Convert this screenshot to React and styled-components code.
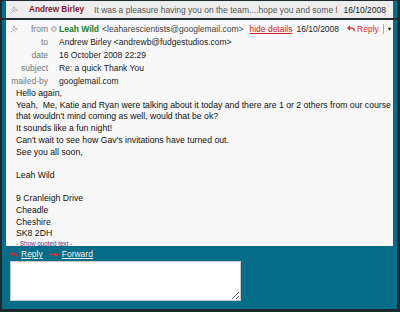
import React from "react";
import styled, { createGlobalStyle } from "styled-components";

const Global = createGlobalStyle`
  html, body { margin: 0; padding: 0; background: #1d2b31; }
  body { font-family: "Liberation Sans", Arial, sans-serif; }
  * { box-sizing: border-box; }
`;

const Frame = styled.div`
  width: 400px;
  height: 312px;
  background: #046d87;
  border-style: solid;
  border-color: #1d2b31;
  border-width: 1px 3px 3px 2px;
  display: flex;
  flex-direction: column;
  font-size: 8.5px;
  color: #111;
`;

const CollapsedRow = styled.div`
  height: 17px;
  margin: 0 4px;
  background: #ededed;
  display: flex;
  align-items: center;
  padding: 0 7px 0 4px;
  white-space: nowrap;
`;

const Divider = styled.div`
  height: 2px;
  background: #1d2b31;
`;

const PinIcon = styled.svg`
  width: 8px;
  height: 8px;
  flex: none;
`;

const Sender = styled.span`
  font-weight: bold;
  font-size: ${(p) => p.$size || 8.5}px;
  color: ${(p) => p.$color};
  margin-left: ${(p) => p.$offset || 0}px;
  flex: none;
`;

const Summary = styled.span`
  flex: 1;
  min-width: 0;
  overflow: hidden;
  color: #555;
  margin: 0 6px 0 10px;
`;

const DateText = styled.span`
  color: #222;
  flex: none;
  margin-left: ${(p) => p.$offset || 0}px;
`;

const Message = styled.div`
  height: 226px;
  margin: 0 4px;
  background: #f8f8f8;
  overflow: hidden;
  display: flex;
  flex-direction: column;
`;

const Header = styled.div`
  display: grid;
  grid-template-columns: 38px 11px 1fr;
  grid-auto-rows: 13px;
  align-items: center;
  padding: 2px 7px 0 4px;
`;

const Label = styled.div`
  color: #777;
  display: flex;
  justify-content: ${(p) => (p.$withPin ? "space-between" : "flex-end")};
  align-items: center;
  white-space: nowrap;
`;

const DotCell = styled.div`
  display: flex;
  justify-content: center;
  align-items: center;
`;

const Value = styled.div`
  color: #222;
  display: flex;
  align-items: center;
  white-space: nowrap;
`;

const Email = styled.span`
  color: #444;
  margin-left: 3px;
`;

const RightGroup = styled.div`
  margin-left: auto;
  padding-left: 6px;
  display: flex;
  align-items: center;
`;

const RedLink = styled.span`
  color: #d0262c;
  text-decoration: underline;
`;

const ReplyBtn = styled.span`
  display: flex;
  align-items: center;
  gap: 2px;
  margin-left: 8px;
  color: #d92b2b;
`;

const Sep = styled.span`
  width: 1px;
  height: 10px;
  background: #aaa;
  margin: 0 3px 0 4px;
`;

const Caret = styled.span`
  font-size: 5.5px;
  color: #111;
`;

const Body = styled.div`
  padding: 1px 6px 0 10px;
  font-size: 8.7px;
  line-height: 11.7px;
  color: #111;
  white-space: nowrap;
`;

const Line = styled.div`
  min-height: 11.7px;
`;

const Quoted = styled.div`
  font-size: 6.3px;
  line-height: 7.5px;
  color: #5a2f80;
`;

const Actions = styled.div`
  height: 15px;
  display: flex;
  align-items: center;
  padding: 1px 0 0 8px;
  gap: 7px;
`;

const ActionLink = styled.span`
  display: flex;
  align-items: center;
  gap: 3px;
  color: #eef2f3;
  text-decoration: underline;
`;

const ReplyArea = styled.textarea`
  width: 231px;
  height: 40px;
  margin: 0 0 0 8px;
  background: #fff;
  border: 1px solid #c8c8c8;
  padding: 0;
  resize: both;
  outline: none;
`;

const Pin = () => (
  <PinIcon viewBox="0 0 8 8">
    <g stroke="#b4b4b4" strokeWidth="1" fill="none" strokeLinecap="round">
      <path d="M3 1.2 L6.8 5" />
      <path d="M1.8 3 L5 6.2" />
      <path d="M4.6 1 L4 3" />
      <path d="M7 3.5 L5 4" />
      <path d="M3 5 L0.8 7.2" />
    </g>
  </PinIcon>
);

const Dot = () => (
  <svg width="6" height="6" viewBox="0 0 6 6">
    <circle cx="3" cy="3" r="2.3" fill="#e4e4e4" stroke="#9a9a9a" strokeWidth="0.9" />
  </svg>
);

const ReplyIcon = () => (
  <svg width="8" height="7" viewBox="0 0 10 8">
    <path d="M1.5 3.5 H6 Q9 3.5 9 6.5 V7.5" stroke="#d92b2b" strokeWidth="1.6" fill="none" />
    <path d="M0 3.5 L3.8 0.3 V6.7 Z" fill="#d92b2b" />
  </svg>
);

const ForwardIcon = () => (
  <svg width="9" height="7" viewBox="0 0 10 8">
    <path d="M0 4 H6" stroke="#e0302a" strokeWidth="1.8" />
    <path d="M10 4 L5.5 0.5 V7.5 Z" fill="#e0302a" />
  </svg>
);

const headerRows = [
  { label: "to", value: "Andrew Birley <andrewb@fudgestudios.com>" },
  { label: "date", value: "16 October 2008 22:29" },
  { label: "subject", value: "Re: a quick Thank You" },
  { label: "mailed-by", value: "googlemail.com" },
];

const bodyLines = [
  "Hello again,",
  "Yeah,\u00a0 Me, Katie and Ryan were talking about it today and there are 1 or 2 others from our course",
  "that wouldn't mind coming as well, would that be ok?",
  "It sounds like a fun night!",
  "Can't wait to see how Gav's invitations have turned out.",
  "See you all soon,",
  "",
  "Leah Wild",
  "",
  "9 Cranleigh Drive",
  "Cheadle",
  "Cheshire",
  "SK8 2DH",
];

export default function App() {
  return (
    <>
      <Global />
      <Frame>
        <CollapsedRow>
          <Pin />
          <Sender $color="#871a2c" $offset={11} $size={8.2}>Andrew Birley</Sender>
          <Summary>It was a pleasure having you on the team....hope you and some fr</Summary>
          <DateText>16/10/2008</DateText>
        </CollapsedRow>
        <Divider />
        <Message>
          <Header>
            <Label $withPin>
              <Pin />
              <span>from</span>
            </Label>
            <DotCell>
              <Dot />
            </DotCell>
            <Value>
              <Sender $color="#1b7d1b">Leah Wild</Sender>
              <Email>&lt;leaharescientists@googlemail.com&gt;</Email>
              <RightGroup>
                <RedLink>hide details</RedLink>
                <DateText $offset={4}>16/10/2008</DateText>
                <ReplyBtn>
                  <ReplyIcon />
                  <span>Reply</span>
                </ReplyBtn>
                <Sep />
                <Caret>▼</Caret>
              </RightGroup>
            </Value>
            {headerRows.map((r) => (
              <React.Fragment key={r.label}>
                <Label>{r.label}</Label>
                <DotCell />
                <Value>{r.value}</Value>
              </React.Fragment>
            ))}
          </Header>
          <Body>
            {bodyLines.map((l, i) => (
              <Line key={i}>{l}</Line>
            ))}
            <Quoted>- Show quoted text -</Quoted>
          </Body>
        </Message>
        <Actions>
          <ActionLink>
            <ReplyIcon />
            <span>Reply</span>
          </ActionLink>
          <ActionLink>
            <ForwardIcon />
            <span>Forward</span>
          </ActionLink>
        </Actions>
        <ReplyArea />
      </Frame>
    </>
  );
}
